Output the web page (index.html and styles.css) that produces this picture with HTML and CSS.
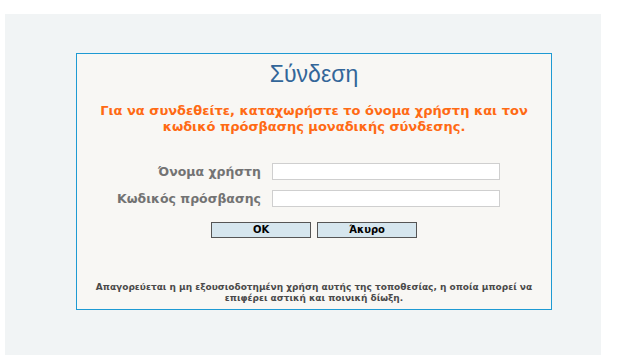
FILE: index.html
```html
<!DOCTYPE html>
<html lang="el">
<head>
<meta charset="utf-8">
<title>Σύνδεση</title>
<link rel="stylesheet" href="styles.css">
</head>
<body>
<div class="page">
  <div class="box">
    <h1 class="title">Σύνδεση</h1>
    <p class="intro">Για να συνδεθείτε, καταχωρήστε το όνομα χρήστη και τον<br>κωδικό πρόσβασης μοναδικής σύνδεσης.</p>
    <form class="form">
      <div class="row">
        <label class="label" for="u">Όνομα χρήστη</label>
        <input class="field" id="u" type="text">
      </div>
      <div class="row">
        <label class="label" for="p">Κωδικός πρόσβασης</label>
        <input class="field" id="p" type="password">
      </div>
      <div class="buttons">
        <button type="button" class="btn">OK</button>
        <button type="button" class="btn">Άκυρο</button>
      </div>
    </form>
    <p class="notice">Απαγορεύεται η μη εξουσιοδοτημένη χρήση αυτής της τοποθεσίας, η οποία μπορεί να<br>επιφέρει αστική και ποινική δίωξη.</p>
  </div>
</div>
</body>
</html>
```
FILE: styles.css
```css
html, body {
  margin: 0;
  padding: 0;
  background: #ffffff;
}
body {
  font-family: "DejaVu Sans", Verdana, sans-serif;
}
.page {
  margin: 14px 0 0 5px;
  width: 596px;
  height: 341px;
  background: #f1f4f5;
  padding-top: 39px;
  box-sizing: border-box;
}
.box {
  margin-left: 71px;
  width: 476px;
  height: 257px;
  box-sizing: border-box;
  border: 1px solid #1e9ad3;
  background: #f8f7f4;
  display: flex;
  flex-direction: column;
  align-items: center;
}
.title {
  margin: 6px 0 0;
  font-family: "Liberation Sans", Arial, sans-serif;
  font-weight: normal;
  font-size: 23px;
  line-height: 28px;
  color: #336699;
}
.intro {
  margin: 15px 0 0;
  font-family: "DejaVu Sans", Verdana, sans-serif;
  font-weight: bold;
  font-size: 13px;
  line-height: 16px;
  color: #ff6a13;
  text-align: center;
}
.form {
  align-self: stretch;
  margin: 28px 0 0;
  display: flex;
  flex-direction: column;
}
.row {
  display: flex;
  align-items: center;
  gap: 11px;
  margin-bottom: 10px;
}
.label {
  width: 184px;
  text-align: right;
  font-family: "DejaVu Sans", Verdana, sans-serif;
  font-weight: bold;
  font-size: 12.5px;
  color: #737373;
}
.field {
  width: 228px;
  height: 17px;
  box-sizing: border-box;
  border: 1px solid #cfcfcf;
  background: #ffffff;
  margin: 0;
  padding: 0 2px;
}
.buttons {
  display: flex;
  justify-content: center;
  gap: 6px;
  margin-top: 5px;
}
.btn {
  width: 100px;
  height: 16px;
  box-sizing: border-box;
  border: 1px solid #555555;
  background: #d6e6ee;
  font-family: "DejaVu Sans", Verdana, sans-serif;
  font-weight: bold;
  font-size: 10px;
  line-height: 12px;
  color: #000000;
  padding: 0;
  margin: 0;
}
.notice {
  margin: auto 0 5px;
  font-family: "DejaVu Sans", Verdana, sans-serif;
  font-weight: bold;
  font-size: 9px;
  line-height: 11px;
  color: #4a4a4a;
  text-align: center;
}
```
